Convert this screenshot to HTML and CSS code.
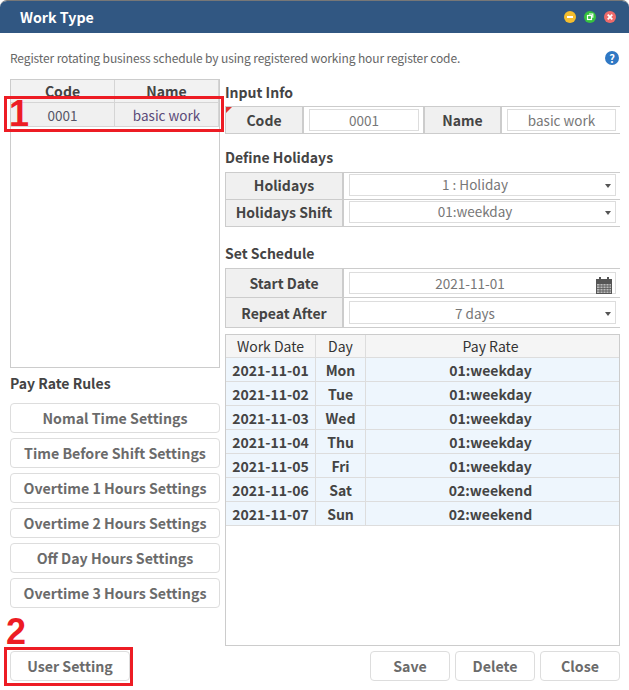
FILE: index.html
```html
<!DOCTYPE html>
<html lang="en">
<head>
  <meta charset="UTF-8" />
  <title>Work Type</title>
  <link rel="stylesheet" href="styles.css">
</head>
<body>
  <div class="window">
    <div class="titlebar">
      <div class="title">Work Type</div>
      <div class="win-btns">
        <svg width="12" height="12" viewBox="0 0 12 12"><circle cx="6" cy="6" r="6" fill="#f4bd2d"/><rect x="3" y="5" width="6" height="2" fill="#fff"/></svg>
        <svg width="12" height="12" viewBox="0 0 12 12"><circle cx="6" cy="6" r="6" fill="#35c23e"/><rect x="3.5" y="4.5" width="4" height="4" fill="none" stroke="#fff" stroke-width="1.2"/><path d="M5 3h3.8v3.8" fill="none" stroke="#fff" stroke-width="1.2"/></svg>
        <svg width="12" height="12" viewBox="0 0 12 12"><circle cx="6" cy="6" r="6" fill="#ee6a6a"/><path d="M3.7 3.7l4.6 4.6M8.3 3.7l-4.6 4.6" stroke="#fff" stroke-width="1.8"/></svg>
      </div>
    </div>

    <div class="desc-row">
      <div class="desc">Register rotating business schedule by using registered working hour register code.</div>
      <div class="help">?</div>
    </div>

    <div class="content">
      <div class="left">
        <div class="list">
          <div class="list-row list-head"><div class="list-cell">Code</div><div class="list-cell">Name</div></div>
          <div class="list-row list-sel"><div class="list-cell">0001</div><div class="list-cell sel-name">basic work</div></div>
        </div>
        <h3 class="rules-title">Pay Rate Rules</h3>
        <div class="rules">
          <div class="btn">Nomal Time Settings</div>
          <div class="btn">Time Before Shift Settings</div>
          <div class="btn">Overtime 1 Hours Settings</div>
          <div class="btn">Overtime 2 Hours Settings</div>
          <div class="btn">Off Day Hours Settings</div>
          <div class="btn">Overtime 3 Hours Settings</div>
        </div>
      </div>

      <div class="right">
        <h3 class="sec-title first">Input Info</h3>
        <div class="form form-info">
          <div class="form-row">
            <div class="label label-code">Code</div><div class="field f-code"><div class="box">0001</div></div>
            <div class="label label-name">Name</div><div class="field f-name"><div class="box">basic work</div></div>
          </div>
        </div>

        <h3 class="sec-title">Define Holidays</h3>
        <div class="form form-holidays">
          <div class="form-row row-tight">
            <div class="label">Holidays</div>
            <div class="field"><div class="box select">1 : Holiday<span class="caret"></span></div></div>
          </div>
          <div class="form-row row-tight">
            <div class="label">Holidays Shift</div>
            <div class="field"><div class="box select">01:weekday<span class="caret"></span></div></div>
          </div>
        </div>

        <h3 class="sec-title">Set Schedule</h3>
        <div class="form form-schedule">
          <div class="form-row row-tall">
            <div class="label">Start Date</div>
            <div class="field"><div class="box date">2021-11-01
              <svg class="cal" width="16" height="17" viewBox="0 0 16 17"><rect x="0" y="2" width="16" height="15" fill="#555"/><rect x="3" y="0" width="2" height="3" fill="#555"/><rect x="11" y="0" width="2" height="3" fill="#555"/><path d="M1 7h14v9H1z" fill="#bbb"/><path d="M1 9h14M1 11.5h14M1 14h14M4 7v9M7 7v9M10 7v9M13 7v9" stroke="#555" stroke-width="0.8"/></svg>
            </div></div>
          </div>
          <div class="form-row row-tall">
            <div class="label">Repeat After</div>
            <div class="field"><div class="box select">7 days<span class="caret caret-low"></span></div></div>
          </div>
        </div>

        <div class="grid">
          <div class="grid-row grid-head"><div>Work Date</div><div>Day</div><div>Pay Rate</div></div>
          <div class="grid-row"><div>2021-11-01</div><div>Mon</div><div>01:weekday</div></div>
          <div class="grid-row"><div>2021-11-02</div><div>Tue</div><div>01:weekday</div></div>
          <div class="grid-row"><div>2021-11-03</div><div>Wed</div><div>01:weekday</div></div>
          <div class="grid-row"><div>2021-11-04</div><div>Thu</div><div>01:weekday</div></div>
          <div class="grid-row"><div>2021-11-05</div><div>Fri</div><div>01:weekday</div></div>
          <div class="grid-row"><div>2021-11-06</div><div>Sat</div><div>02:weekend</div></div>
          <div class="grid-row"><div>2021-11-07</div><div>Sun</div><div>02:weekend</div></div>
        </div>
      </div>
    </div>

    <div class="footer">
      <div class="btn btn-user">User Setting</div>
      <div class="footer-right">
        <div class="btn btn-foot">Save</div>
        <div class="btn btn-foot">Delete</div>
        <div class="btn btn-foot">Close</div>
      </div>
    </div>

    <!-- annotations drawn over the screen -->
    <div class="mark-box mark-box-1"></div>
    <div class="mark-num mark-num-1">1</div>
    <div class="mark-box mark-box-2"></div>
    <div class="mark-num mark-num-2">2</div>
    <div class="req-flag"></div>
  </div>
</body>
</html>
```

FILE: styles.css
```css
* {
  box-sizing: border-box;
}
html, body {
  margin: 0;
  height: 100%;
  overflow: hidden;
}
body {
  background: #fff;
  color: #333;
  font-family: "Noto Sans CJK KR", "Noto Sans", sans-serif;
  font-size: 13.5px;
}
.window {
  position: relative;
  width: 629px;
  height: 690px;
  background: #fff;
  border-top: 1px solid #777;
  border-radius: 7px 7px 0 0;
  overflow: hidden;
}
.titlebar {
  height: 32px;
  background: #315782;
  display: flex;
  align-items: center;
  justify-content: space-between;
  padding: 0 13px 0 20px;
}
.title {
  color: #fff;
  font-size: 14.2px;
  font-weight: bold;
}
.win-btns {
  display: flex;
  gap: 8px;
}
.win-btns svg {
  display: block;
}
.desc-row {
  height: 46px;
  display: flex;
  align-items: center;
  justify-content: space-between;
  padding: 3px 10px 0 10px;
}
.desc {
  color: #666;
  font-size: 12px;
  letter-spacing: -0.12px;
}
.help {
  width: 14px;
  height: 14px;
  border-radius: 50%;
  background: #2f78c4;
  color: #fff;
  font-size: 11px;
  font-weight: bold;
  line-height: 14px;
  text-align: center;
}
.content {
  display: flex;
  gap: 5px;
  padding: 0 9px 0 10px;
}
.left {
  width: 210px;
}
.right {
  width: 395px;
}
.list {
  height: 289px;
  border: 1px solid #ccc;
}
.list-row {
  display: flex;
  height: 24px;
  border-bottom: 1px solid #d5d5d5;
}
.list-head {
  height: 23px;
  background: #f2f2f2;
  font-weight: bold;
  font-size: 14px;
  color: #444;
}
.list-sel {
  background: #f0f0f0;
  color: #556;
}
.list-cell {
  width: 50%;
  display: flex;
  align-items: center;
  justify-content: center;
  border-right: 1px solid #d5d5d5;
}
.sel-name {
  color: #5b4a78;
}
.rules-title {
  margin: 0;
  height: 35px;
  line-height: 31px;
  font-size: 14px;
  font-weight: bold;
  color: #444;
}
.rules {
  display: flex;
  flex-direction: column;
  gap: 5px;
}
.btn {
  height: 30px;
  display: flex;
  align-items: center;
  justify-content: center;
  padding-bottom: 1px;
  background: #fff;
  border: 1px solid #ddd;
  border-radius: 4px;
  color: #6b6b6b;
  font-size: 14.2px;
  font-weight: bold;
}
.sec-title {
  margin: 0;
  height: 28px;
  padding-top: 3px;
  line-height: 20px;
  font-size: 14px;
  font-weight: bold;
  color: #444;
}
.sec-title.first {
  height: 27px;
}
.form {
  border-top: 1px solid #ccc;
  border-bottom: 1px solid #ccc;
}
.form-info {
  margin-bottom: 10px;
}
.form-holidays {
  margin-bottom: 13px;
}
.form-schedule {
  margin-bottom: 6px;
}
.form-row {
  display: flex;
  height: 26px;
}
.form-row + .form-row {
  border-top: 1px solid #ccc;
}
.form-row + .row-tight {
  height: 27px;
}
.row-tight .field {
  padding: 1px 4px 3px 5px;
}
.row-tight .label {
  padding-bottom: 2px;
}
.row-tall {
  height: 28px;
}
.form-row + .row-tall {
  height: 30px;
}
.row-tall .field {
  padding: 3px 4px 3px 5px;
}
.label {
  width: 119px;
  flex-shrink: 0;
  display: flex;
  align-items: center;
  justify-content: center;
  background: #f0f0f0;
  border-left: 1px solid #ccc;
  border-right: 2px solid #ccc;
  font-weight: bold;
  color: #444;
  font-size: 14px;
}
.label-code {
  width: 79px;
}
.label-name {
  width: 79px;
  border-left: 2px solid #ccc;
}
.field {
  flex: 1;
  display: flex;
  padding: 2px 4px 2px 5px;
}
.f-code {
  flex: 0 0 119px;
}
.f-name {
  flex: 1;
}
.box {
  flex: 1;
  position: relative;
  display: flex;
  align-items: center;
  justify-content: center;
  border: 1px solid #ddd;
  color: #777;
  font-size: 13.5px;
}
.select {
  padding-right: 15px;
}
.row-tight .select {
  padding-bottom: 2px;
}
.date {
  padding-right: 25px;
}
.caret {
  position: absolute;
  right: 4px;
  top: 9px;
  border-left: 3.5px solid transparent;
  border-right: 3.5px solid transparent;
  border-top: 4px solid #555;
}
.caret-low {
  top: 10px;
}
.cal {
  position: absolute;
  right: 3px;
  top: 4px;
}
.grid {
  height: 312px;
  width: 395px;
  border: 1px solid #ccc;
}
.grid-row {
  display: grid;
  grid-template-columns: 90px 50px 1fr;
  height: 24px;
  background: #eef6fd;
  border-bottom: 1px solid #ddd;
  font-weight: bold;
  font-size: 14px;
  color: #444;
}
.grid-row > div {
  display: flex;
  align-items: center;
  justify-content: center;
  border-right: 1px solid #ddd;
}
.grid-row > div:last-child {
  border-right: 0;
  padding-right: 4px;
}
.grid-head {
  height: 23px;
  background: #f5f5f5;
  font-weight: normal;
  color: #333;
}
.footer {
  position: absolute;
  left: 10px;
  right: 9px;
  top: 650px;
  display: flex;
  justify-content: space-between;
}
.footer-right {
  display: flex;
  gap: 5px;
}
.btn-user {
  width: 120px;
}
.btn-foot {
  width: 80px;
}
.mark-box {
  position: absolute;
  border: 3px solid #ed1c24;
}
.mark-box-1 {
  left: 4px;
  top: 95px;
  width: 220px;
  height: 36px;
}
.mark-box-2 {
  left: 4px;
  top: 646px;
  width: 129px;
  height: 39px;
}
.mark-num {
  position: absolute;
  color: #ed1c24;
  font-family: "Liberation Sans", sans-serif;
  font-weight: bold;
  font-size: 36px;
  line-height: 36px;
}
.mark-num-1 {
  left: 9px;
  top: 95px;
}
.mark-num-2 {
  left: 6px;
  top: 613px;
}
.req-flag {
  position: absolute;
  left: 226px;
  top: 106px;
  border-top: 6px solid #e03030;
  border-right: 6px solid transparent;
}
```
